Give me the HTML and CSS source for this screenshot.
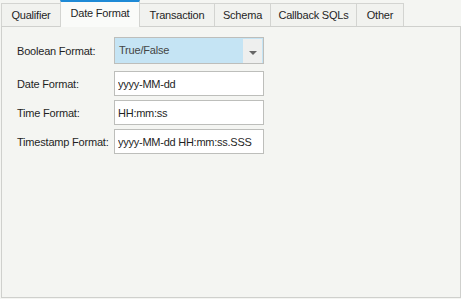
FILE: index.html
```html
<!DOCTYPE html>
<html lang="en">
<head>
  <meta charset="UTF-8">
  <title>Data Source Options</title>
  <link rel="stylesheet" href="styles.css">
</head>
<body>

  <div class="dialog">
    <!-- Tab strip -->
    <div class="tabs">
      <div class="tab">Qualifier</div>
      <div class="tab active">Date Format</div>
      <div class="tab">Transaction</div>
      <div class="tab">Schema</div>
      <div class="tab">Callback SQLs</div>
      <div class="tab">Other</div>
    </div>

    <!-- Date Format page -->
    <div class="panel">
      <div class="row">
        <label>Boolean Format:</label>
        <div class="combo">
          <span class="combo-value">True/False</span>
          <span class="combo-button"><span class="arrow"></span></span>
        </div>
      </div>
      <div class="row">
        <label for="dateFormat">Date Format:</label>
        <input type="text" id="dateFormat" value="yyyy-MM-dd">
      </div>
      <div class="row">
        <label for="timeFormat">Time Format:</label>
        <input type="text" id="timeFormat" value="HH:mm:ss">
      </div>
      <div class="row">
        <label for="timestampFormat">Timestamp Format:</label>
        <input type="text" id="timestampFormat" value="yyyy-MM-dd HH:mm:ss.SSS">
      </div>
    </div>
  </div>

</body>
</html>
```

FILE: styles.css
```css
body {
  margin: 0;
  font-family: "Liberation Sans", Arial, sans-serif;
  font-size: 11px;
  letter-spacing: -0.2px;
  color: #1f1f1f;
  background-color: #f4f5f2;
}

.dialog {
  width: 461px;
  height: 299px;
}

.tabs {
  display: flex;
  align-items: flex-end;
  height: 26px;
  padding-left: 1px;
}

.tab {
  box-sizing: border-box;
  height: 23px;
  line-height: 23px;
  text-align: center;
  border: 1px solid #d3d4d1;
  border-bottom: none;
  border-left: none;
  background-color: #f1f2ef;
}

.tab:nth-child(1) { width: 60px; border-left: 1px solid #d3d4d1; }
.tab:nth-child(2) { width: 80px; }
.tab:nth-child(3) { width: 75px; }
.tab:nth-child(4) { width: 56px; }
.tab:nth-child(5) { width: 86px; }
.tab:nth-child(6) { width: 47px; }

.tab.active {
  height: 27px;
  line-height: 23px;
  margin: 0 0 -1px -1px;
  border-top: 2px solid #1e8ad6;
  border-left: 1px solid #d3d4d1;
  background-color: #fafbf9;
}

.panel {
  margin-left: 1px;
  width: 460px;
  height: 272px;
  border: 1px solid #cfd0cd;
  box-sizing: border-box;
  padding-top: 10px;
}

.row {
  display: flex;
  align-items: center;
  height: 25px;
  margin-bottom: 4px;
  padding-left: 15px;
}

.row:first-child {
  height: 27px;
  margin-bottom: 7px;
}

label {
  width: 97px;
}

input {
  width: 150px;
  height: 25px;
  box-sizing: border-box;
  margin: 0;
  padding: 0 3px;
  border: 1px solid #bdbebb;
  background-color: #fff;
  font-family: inherit;
  font-size: 11px;
  letter-spacing: -0.25px;
  color: #1f1f1f;
  outline: none;
}

.combo {
  display: flex;
  width: 150px;
  height: 27px;
  box-sizing: border-box;
  border: 1px solid #bdbebb;
  background-color: #c5e4f4;
}

.combo-value {
  flex: 1;
  line-height: 25px;
  padding-left: 4px;
  color: #444;
}

.combo-button {
  display: flex;
  align-items: center;
  justify-content: center;
  width: 19px;
  height: 24px;
  margin: 1px 1px 0 0;
  background-color: #eeefee;
}

.arrow {
  width: 0;
  height: 0;
  border-left: 4px solid transparent;
  border-right: 4px solid transparent;
  border-top: 4px solid #666;
  margin-top: 3px;
}
```
